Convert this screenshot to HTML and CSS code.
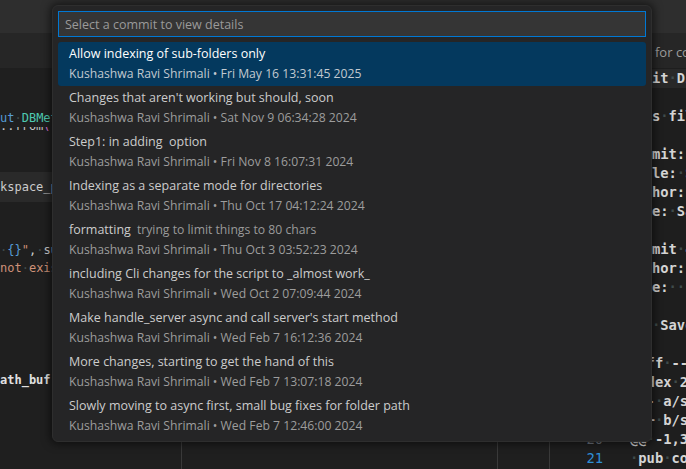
FILE: index.html
```html
<!DOCTYPE html>
<html>
<head>
<meta charset="utf-8">
<link rel="stylesheet" href="styles.css">
</head>
<body>
<div class="window">
  <div class="titlebar"></div>
  <div class="tabbar"><span class="tabtext">for commit</span></div>
  <div class="editor">
    <div class="pane left">
      <div class="cl l1"><span class="kw">ut</span><span class="ws">·</span><span class="ty">DBMetadata</span></div>
      <div class="partial"><div class="cl"><span class="fn">::from</span><span class="br">(</span>re</div></div>
      <div class="cl l2 hl">kspace_path</div>
      <div class="cl l3"><span class="ws">·</span><span class="kw">{}</span><span class="str">"</span>,<span class="ws">·</span>su</div>
      <div class="cl"><span class="str">not<span class="ws">·</span>exist</span></div>
      <div class="cl l5 bright">ath_buf</div>
    </div>
    <div class="pane mid"></div>
    <div class="pane narrow"></div>
    <div class="pane right">
      <div class="gutter">
        <div class="ln">1</div><div class="ln">2</div><div class="ln">3</div><div class="ln">4</div><div class="ln">5</div>
        <div class="ln">6</div><div class="ln">7</div><div class="ln">8</div><div class="ln">9</div><div class="ln">10</div>
        <div class="ln">11</div><div class="ln">12</div><div class="ln">13</div><div class="ln">14</div><div class="ln">15</div>
        <div class="ln">16</div><div class="ln">17</div><div class="ln">18</div><div class="ln">19</div><div class="ln">20</div>
        <div class="ln active">21</div>
      </div>
      <div class="code">
        <div class="rl md cur">Audit<span class="ws">·</span>Diff</div>
        <div class="rl"></div>
        <div class="rl md">Uses<span class="ws">·</span>files</div>
        <div class="rl"></div>
        <div class="rl md">Commit:<span class="ws">·</span>8f3a</div>
        <div class="rl md">Title:<span class="ws">·</span>Slow</div>
        <div class="rl md">Author:<span class="ws">·</span>K</div>
        <div class="rl md">Date:<span class="ws">·</span>Sat</div>
        <div class="rl"></div>
        <div class="rl md">Commit<span class="ws">·</span>4a1b</div>
        <div class="rl md">Author:<span class="ws">·</span>K</div>
        <div class="rl md">Date:<span class="ws">··</span></div>
        <div class="rl"></div>
        <div class="rl md">Was<span class="ws">·</span>Saved</div>
        <div class="rl"></div>
        <div class="rl">diff<span class="ws">·</span>--git</div>
        <div class="rl">index<span class="ws">·</span>2c3</div>
        <div class="rl">---<span class="ws">·</span>a/src</div>
        <div class="rl">+++<span class="ws">·</span>b/src</div>
        <div class="rl">@@<span class="ws">·</span>-1,3</div>
        <div class="rl"><span class="ws">·</span>pub<span class="ws">·</span>const</div>
      </div>
    </div>
  </div>

  <div class="quickpick">
    <div class="qinput">Select a commit to view details</div>
    <div class="qlist">
      <div class="item selected">
        <div class="label">Allow indexing of sub-folders only</div>
        <div class="detail">Kushashwa Ravi Shrimali • Fri May 16 13:31:45 2025</div>
      </div>
      <div class="item">
        <div class="label">Changes that aren't working but should, soon</div>
        <div class="detail">Kushashwa Ravi Shrimali • Sat Nov 9 06:34:28 2024</div>
      </div>
      <div class="item">
        <div class="label">Step1: in adding  option</div>
        <div class="detail">Kushashwa Ravi Shrimali • Fri Nov 8 16:07:31 2024</div>
      </div>
      <div class="item">
        <div class="label">Indexing as a separate mode for directories</div>
        <div class="detail">Kushashwa Ravi Shrimali • Thu Oct 17 04:12:24 2024</div>
      </div>
      <div class="item">
        <div class="label">formatting<span class="desc">trying to limit things to 80 chars</span></div>
        <div class="detail">Kushashwa Ravi Shrimali • Thu Oct 3 03:52:23 2024</div>
      </div>
      <div class="item">
        <div class="label">including Cli changes for the script to _almost work_</div>
        <div class="detail">Kushashwa Ravi Shrimali • Wed Oct 2 07:09:44 2024</div>
      </div>
      <div class="item">
        <div class="label">Make handle_server async and call server's start method</div>
        <div class="detail">Kushashwa Ravi Shrimali • Wed Feb 7 16:12:36 2024</div>
      </div>
      <div class="item">
        <div class="label">More changes, starting to get the hand of this</div>
        <div class="detail">Kushashwa Ravi Shrimali • Wed Feb 7 13:07:18 2024</div>
      </div>
      <div class="item">
        <div class="label">Slowly moving to async first, small bug fixes for folder path</div>
        <div class="detail">Kushashwa Ravi Shrimali • Wed Feb 7 12:46:00 2024</div>
      </div>
    </div>
  </div>
</div>
</body>
</html>
```

FILE: styles.css
```css
* { box-sizing: border-box; }
html, body { margin: 0; padding: 0; }
body {
  width: 686px;
  height: 469px;
  overflow: hidden;
  background: #1f1f1f;
  font-family: "Open Sans", "Noto Sans", sans-serif;
}
.window {
  position: relative;
  width: 686px;
  height: 469px;
  display: flex;
  flex-direction: column;
}
.titlebar {
  height: 33px;
  background: #2e2e2e;
  flex: none;
}
.tabbar {
  height: 35px;
  background: #262626;
  flex: none;
  display: flex;
  align-items: center;
  padding-left: 655px;
  padding-top: 3px;
  white-space: nowrap;
  overflow: hidden;
}
.tabtext {
  color: #9d9d9d;
  font-size: 13px;
}
.editor {
  flex: 1;
  display: flex;
  min-height: 0;
}
.pane {
  flex: none;
  height: 100%;
  overflow: hidden;
}
.left {
  width: 182px;
  border-right: 1px solid #3a3a3a;
  font-family: "DejaVu Sans Mono", monospace;
  font-size: 12px;
  color: #cccccc;
  padding-top: 40.6px;
}
.cl { height: 18.8px; line-height: 18.8px; white-space: pre; }
.partial { height: 5px; overflow: hidden; }
.partial .cl { margin-top: -10px; }
.fn { color: #c8c8c8; }
.br { color: #da70d6; }
.l2 { margin-top: 39.6px; height: 30px; line-height: 30px; }
.l3 { margin-top: 38.6px; }
.l5 { margin-top: 92.4px; }
.hl { background: #2a2a2a; }
.kw { color: #569cd6; }
.ty { color: #4ec9b0; }
.str { color: #ce9178; }
.ws { color: #3f4b4b; }
.bright { color: #e0e0e0; font-weight: bold; }
.mid {
  width: 316px;
  border-right: 1px solid #3a3a3a;
}
.narrow {
  width: 52px;
  border-right: 1px solid #3a3a3a;
}
.right {
  flex: 1;
  display: flex;
  background: #1e1e1e;
}
.gutter {
  width: 80px;
  flex: none;
  padding-right: 27px;
  padding-top: 1px;
  text-align: right;
  font-family: "DejaVu Sans Mono", monospace;
  font-size: 13.8px;
  color: #6e7681;
}
.ln { height: 19px; line-height: 19px; }
.ln.active { color: #2f8fd6; }
.code {
  flex: 1;
  padding-top: 1px;
  font-family: "DejaVu Sans Mono", monospace;
  font-weight: bold;
  font-size: 13.8px;
  color: #d4d4d4;
}
.rl { height: 19px; line-height: 19px; white-space: pre; }
.rl.md { margin-left: -3px; }
.rl.cur { background: #282828; }

.quickpick {
  position: absolute;
  top: 5px;
  left: 52px;
  width: 600px;
  height: 437px;
  background: #252526;
  border: 1px solid #2e2e2e;
  border-radius: 6px;
  box-shadow: 0 0 8px 2px rgba(0, 0, 0, 0.55);
  padding: 5px 5px 4px 5px;
  display: flex;
  flex-direction: column;
  gap: 5px;
}
.qinput {
  height: 26px;
  flex: none;
  border: 1px solid #0078d4;
  background: #353535;
  color: #9a9a9a;
  font-size: 12.5px;
  line-height: 22px;
  padding-top: 2px;
  padding-left: 6px;
}
.qlist {
  display: flex;
  flex-direction: column;
}
.item {
  height: 44px;
  flex: none;
  padding-left: 11px;
  padding-top: 1px;
  border-radius: 3px;
}
.label {
  font-size: 12.5px;
  line-height: 22px;
  height: 22px;
  color: #cccccc;
  white-space: pre;
}
.desc {
  font-size: 12.2px;
  color: #9a9a9a;
  margin-left: 6px;
}
.detail {
  font-size: 12.2px;
  line-height: 17px;
  color: #9d9d9d;
  white-space: pre;
}
.item.selected { background: #04395e; }
.item.selected .label { color: #ffffff; }
.item.selected .detail { color: #c2c9d0; }
```
